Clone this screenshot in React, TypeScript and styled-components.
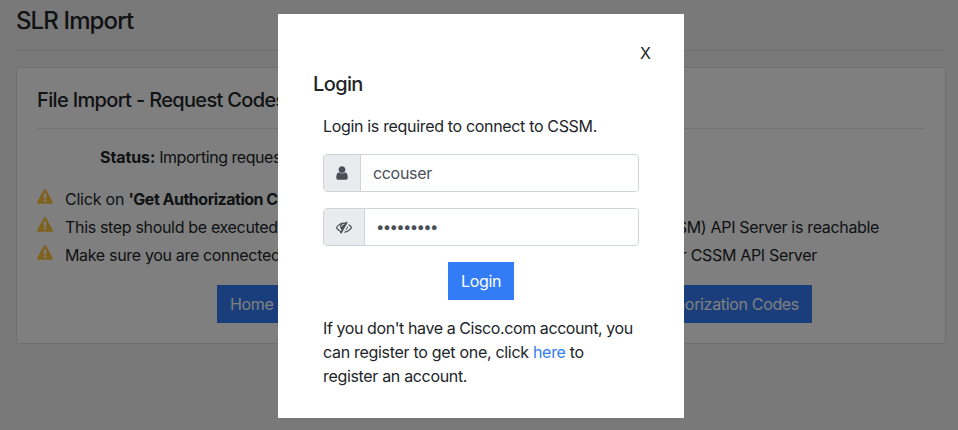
import React from 'react';
import styled, { createGlobalStyle } from 'styled-components';

const Global = createGlobalStyle`
  *, *::before, *::after { box-sizing: border-box; }
  body {
    margin: 0;
    background: #f3f3f3;
    color: #212529;
    font: 400 16px/24px Inter, "Liberation Sans", sans-serif;
    letter-spacing: -0.33px;
    overflow: hidden;
  }
  h1, h2, h3, p, ul { margin: 0; padding: 0; font-weight: 500; }
  p { font-weight: 400; }
`;

const Page = styled.main`
  height: 430px;
  padding: 6px 12px 0 16px;
`;

const PageTitle = styled.h1`
  font-size: 24px;
  line-height: 29px;
  letter-spacing: -0.88px;
  padding-bottom: 15px;
  border-bottom: 1px solid rgba(0, 0, 0, 0.1);
`;

const Card = styled.section`
  height: 277px;
  margin-top: 16px;
  padding: 20px;
  background: #fff;
  border: 1px solid rgba(0, 0, 0, 0.125);
  border-radius: 4px;
`;

const CardTitle = styled.h2`
  font-size: 20px;
  line-height: 24px;
  letter-spacing: -0.66px;
  padding-bottom: 16px;
  border-bottom: 1px solid rgba(0, 0, 0, 0.1);
`;

const Status = styled.p`
  margin: 16px 0 16px 63px;
  letter-spacing: -0.45px;
`;

const Strong = styled.b<{ $tracking?: number }>`
  font-weight: 700;
  letter-spacing: ${(p) => p.$tracking ?? -0.5}px;
`;

const Notes = styled.ul`
  list-style: none;
`;

const Note = styled.li`
  display: flex;
  gap: 12px;
  height: 28px;
  padding-top: 2px;
  font-weight: 400;
  white-space: nowrap;
`;

const Lead = styled.span`
  letter-spacing: -0.22px;
`;

const NoteTail = styled.span<{ $gap: number }>`
  margin-left: ${(p) => p.$gap}px;
`;

const WarningIcon = styled.svg`
  width: 16px;
  height: 16px;
  margin-top: 2px;
  fill: #ffc43d;
`;

const Actions = styled.div`
  display: flex;
  justify-content: space-between;
  margin: 16px 113px 0 180px;
`;

const Button = styled.button`
  height: 38px;
  padding: 6px 12px;
  border: 1px solid #327cf6;
  background: #327cf6;
  color: #fff;
  font: inherit;
  letter-spacing: inherit;
  white-space: nowrap;
`;

const Overlay = styled.div`
  position: fixed;
  inset: 0;
  display: flex;
  align-items: flex-start;
  padding: 14px 0 0 278px;
  background: rgba(0, 0, 0, 0.5);
`;

const Dialog = styled.div`
  display: flex;
  flex-direction: column;
  width: 406px;
  height: 404px;
  padding: 27px 33px 0 35px;
  background: #fff;
`;

const Close = styled.button`
  align-self: flex-end;
  padding: 0;
  border: 0;
  background: none;
  color: inherit;
  font: inherit;
`;

const DialogTitle = styled.h3`
  margin-top: 7px;
  font-size: 20px;
  line-height: 24px;
  letter-spacing: -0.62px;
`;

const Form = styled.div`
  display: flex;
  flex-direction: column;
  gap: 16px;
  margin: 18px 12px 0 10px;
`;

const Intro = styled.p`
  white-space: nowrap;
`;

const Field = styled.div`
  display: flex;
  height: 38px;
  border: 1px solid #ced4da;
  border-radius: 4px;
  overflow: hidden;
`;

const Addon = styled.span`
  display: flex;
  align-items: center;
  padding: 0 12px;
  border-right: 1px solid #ced4da;
  background: #e9ecef;
`;

const AddonIcon = styled.svg<{ $w: number }>`
  width: ${(p) => p.$w}px;
  height: 16px;
  fill: #495057;
`;

const Input = styled.input`
  flex: 1;
  min-width: 0;
  padding: 0 12px;
  border: 0;
  outline: 0;
  color: #495057;
  font: inherit;
  letter-spacing: -0.33px;

  &[type='password'] {
    padding-left: 11px;
    font-size: 15px;
    letter-spacing: -1.7px;
  }
`;

const Submit = styled(Button)`
  align-self: center;
`;

const Help = styled.p`
  letter-spacing: -0.34px;
  white-space: nowrap;
`;

const HelpLine = styled.span<{ $tracking: number }>`
  display: block;
  letter-spacing: ${(p) => p.$tracking}px;
`;

const Link = styled.a`
  color: #327cf6;
  text-decoration: none;
`;

const Warning = () => (
  <WarningIcon viewBox="0 0 1792 1792">
    <path d="M1024 1375v-190q0-14-9.500-23.500t-22.500-9.500h-192q-13 0-22.500 9.500t-9.500 23.500v190q0 14 9.500 23.500t22.500 9.500h192q13 0 22.500-9.500t9.500-23.500zm-2-374l18-459q0-12-10-19-13-11-24-11h-220q-11 0-24 11-10 7-10 21l17 457q0 10 10 16.500t24 6.500h185q14 0 23.500-6.500t10.500-16.500zm-14-934l768 1408q35 63-2 126-17 29-46.500 46t-63.500 17h-1536q-34 0-63.500-17t-46.500-46q-37-63-2-126l768-1408q17-31 47-49t65-18 65 18 47 49z" />
  </WarningIcon>
);

const User = () => (
  <AddonIcon $w={12} viewBox="256 0 1280 1792">
    <path d="M1536 1399q0 109-62.500 187t-150.500 78h-854q-88 0-150.500-78t-62.500-187q0-85 8.500-160.500t31.500-152 58.500-131 94-89 134.500-34.500q131 128 313 128t313-128q76 0 134.500 34.500t94 89 58.500 131 31.500 152 8.500 160.500zm-256-887q0 159-112.500 271.500t-271.500 112.500-271.500-112.500-112.500-271.500 112.500-271.500 271.500-112.500 271.500 112.500 112.500 271.500z" />
  </AddonIcon>
);

const EyeSlash = () => (
  <AddonIcon $w={16} viewBox="0 0 1792 1792">
    <path d="M555 1335l78-141q-87-63-136-159t-49-203q0-121 61-225-229 117-381 353 167 258 427 375zm389-759q0-20-14-34t-34-14q-125 0-214.500 89.500t-89.500 214.500q0 20 14 34t34 14 34-14 14-34q0-86 61-147t147-61q20 0 34-14t14-34zm363-191q0 7-1 9-106 189-316 567t-315 566l-49 89q-10 16-28 16-12 0-134-70-16-10-16-28 0-12 44-87-143-65-263.500-173t-208.500-245q-20-31-20-69t20-69q153-235 380-371t496-136q89 0 180 17l54-97q10-16 28-16 5 0 18 6t31 15.500 33 18.500 31.500 18.500 19.500 11.500q16 10 16 27zm37 447q0 139-79 253.500t-209 164.500l280-502q8 45 8 84zm448 128q0 35-20 69-39 64-109 145-150 172-347.500 267t-419.500 95l74-132q212-18 392.500-137t301.500-307q-115-179-282-294l63-112q95 64 182.500 153t144.500 184q20 34 20 69z" />
  </AddonIcon>
);

export default function App() {
  return (
    <>
      <Global />
      <Page>
        <PageTitle>SLR Import</PageTitle>
        <Card>
          <CardTitle>File Import - Request Codes</CardTitle>
          <Status>
            <Strong $tracking={-0.1}>Status:</Strong> Importing request codes
          </Status>
          <Notes>
            <Note>
              <Warning />
              <span><Lead>Click on </Lead><Strong>'Get Authorization Codes'</Strong></span>
            </Note>
            <Note>
              <Warning />
              <span>
                This step should be executed only when the Cisco Smart Software Manager{' '}
                <NoteTail $gap={31}>(CSSM) API Server is reachable</NoteTail>
              </span>
            </Note>
            <Note>
              <Warning />
              <span>
                Make sure you are connected to a network that is able to reach the Cisco.com{' '}
                <NoteTail $gap={38}>or CSSM API Server</NoteTail>
              </span>
            </Note>
          </Notes>
          <Actions>
            <Button>Home</Button>
            <Button>Get Authorization Codes</Button>
          </Actions>
        </Card>
      </Page>
      <Overlay>
        <Dialog>
          <Close>X</Close>
          <DialogTitle>Login</DialogTitle>
          <Form>
            <Intro>Login is required to connect to CSSM.</Intro>
            <Field>
              <Addon><User /></Addon>
              <Input type="text" defaultValue="ccouser" />
            </Field>
            <Field>
              <Addon><EyeSlash /></Addon>
              <Input type="password" defaultValue="password1" />
            </Field>
            <Submit>Login</Submit>
            <Help>
              <HelpLine $tracking={-0.41}>If you don't have a Cisco.com account, you</HelpLine>
              <HelpLine $tracking={-0.3}>can register to get one, click <Link>here</Link> to</HelpLine>
              <HelpLine $tracking={-0.33}>register an account.</HelpLine>
            </Help>
          </Form>
        </Dialog>
      </Overlay>
    </>
  );
}
